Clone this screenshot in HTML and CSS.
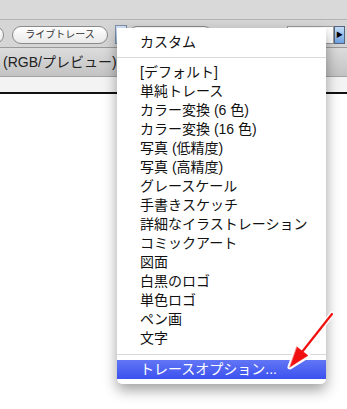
FILE: index.html
```html
<!DOCTYPE html>
<html lang="ja">
<head>
  <meta charset="UTF-8">
  <title>ライブトレース</title>
  <link rel="stylesheet" href="styles.css">
</head>
<body>
  <div class="window">
    <div class="titlebar"></div>

    <div class="toolbar">
      <span class="pill pill-cut"></span>
      <span class="pill">ライブトレース</span>
      <span class="dropbtn"></span>
      <span class="pill pill-wide"></span>
      <span class="field"></span>
      <span class="arrowbtn">&#9654;</span>
    </div>

    <div class="docbar">(RGB/プレビュー)</div>
    <div class="ruler"></div>
    <div class="canvas"></div>

    <!-- プリセットのポップアップメニュー -->
    <div class="menu">
      <div class="item">カスタム</div>
      <div class="sep"></div>
      <div class="item">[デフォルト]</div>
      <div class="item">単純トレース</div>
      <div class="item">カラー変換 (6 色)</div>
      <div class="item">カラー変換 (16 色)</div>
      <div class="item">写真 (低精度)</div>
      <div class="item">写真 (高精度)</div>
      <div class="item">グレースケール</div>
      <div class="item">手書きスケッチ</div>
      <div class="item">詳細なイラストレーション</div>
      <div class="item">コミックアート</div>
      <div class="item">図面</div>
      <div class="item">白黒のロゴ</div>
      <div class="item">単色ロゴ</div>
      <div class="item">ペン画</div>
      <div class="item">文字</div>
      <div class="sep sep-last"></div>
      <div class="item selected">トレースオプション...</div>
    </div>

    <svg class="annot" width="347" height="409" viewBox="0 0 347 409">
      <g stroke="#fff" stroke-width="5" stroke-linecap="round" stroke-linejoin="round" fill="#fff">
        <line x1="332" y1="314" x2="302" y2="352"/>
        <polygon points="290,367 308,355.6 297,346.9"/>
      </g>
      <g stroke="#f01010" stroke-width="2.2" stroke-linecap="round" fill="#f01010">
        <line x1="332" y1="314" x2="302" y2="352"/>
        <polygon points="290,367 308,355.6 297,346.9" stroke-width="0.5"/>
      </g>
    </svg>
  </div>
</body>
</html>
```

FILE: styles.css
```css
body {
  margin: 0;
  width: 347px;
  height: 409px;
  overflow: hidden;
  background: #fff;
  font-family: "Liberation Sans", "Noto Sans CJK JP", sans-serif;
  color: #111;
}
.window {
  position: relative;
  height: 409px;
}
.titlebar {
  height: 19px;
  background: #d9d9d9;
  border-bottom: 1px solid #b3b3b3;
}
.toolbar {
  height: 27px;
  background: #d5d5d5;
  border-bottom: 1px solid #9a9a9a;
  display: flex;
  align-items: flex-start;
  padding-top: 6px;
  box-sizing: border-box;
  height: 28px;
}
.pill {
  box-sizing: border-box;
  height: 18px;
  border: 1px solid #8a8a8a;
  border-radius: 9px;
  background: linear-gradient(#ffffff, #e9e9e9);
  font-size: 10px;
  line-height: 16px;
  color: #333;
  text-align: center;
  flex: none;
  width: 96px;
  margin-left: 8px;
}
.pill-cut {
  width: 20px;
  margin-left: -16px;
}
.dropbtn {
  box-sizing: border-box;
  flex: none;
  width: 12px;
  height: 19px;
  margin-left: 7px;
  margin-top: -1px;
  border: 1px solid #7d8fa8;
  background: linear-gradient(#d6e6f8, #9cc0ea);
}
.pill-wide {
  width: 85px;
  margin-left: 1px;
}
.field {
  box-sizing: border-box;
  flex: none;
  width: 47px;
  height: 18px;
  margin-left: 74px;
  border: 1px solid #9a9a9a;
  background: #fff;
}
.arrowbtn {
  box-sizing: border-box;
  flex: none;
  width: 11px;
  height: 18px;
  border: 1px solid #55657e;
  background: linear-gradient(#c4dcf6, #6fa2e2);
  font-size: 7px;
  line-height: 16px;
  text-align: center;
  color: #000;
}
.docbar {
  box-sizing: border-box;
  height: 29px;
  padding-left: 3px;
  background: linear-gradient(#dcdcdc, #c3c3c3);
  border-bottom: 1px solid #a2a2a2;
  font-size: 14px;
  line-height: 28px;
  color: #222;
}
.ruler {
  height: 15px;
  background: #f3f3f3;
  border-bottom: 2px solid #111;
}
.canvas {
  background: #fff;
}
.menu {
  position: absolute;
  left: 117px;
  top: 28px;
  width: 209px;
  padding: 5px 0;
  background: #fff;
  border-radius: 0 0 5px 5px;
  box-shadow: 0 6px 14px rgba(0, 0, 0, 0.38);
}
.item {
  height: 19px;
  padding-left: 23px;
  font-size: 14px;
  line-height: 19px;
  white-space: nowrap;
}
.sep {
  height: 1px;
  margin: 5px 0;
  background: #d9d9d9;
}
.sep-last {
  margin: 6px 0 5px;
}
.selected {
  color: #fff;
  background: linear-gradient(#6176f5, #3c51ee);
}
.annot {
  position: absolute;
  left: 0;
  top: 0;
}
```
